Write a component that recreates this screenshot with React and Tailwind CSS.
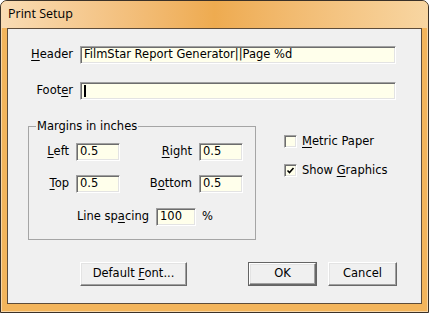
import React from "react";

const font = { fontFamily: '"DejaVu Sans", sans-serif' };

function U({ children }) {
  return <span className="underline underline-offset-2 decoration-1">{children}</span>;
}

function Field({ width, value, caret }) {
  return (
    <div
      className={`${width} h-[18px] bg-[#ffffeb] border border-t-[#a0a0a0] border-l-[#a0a0a0] border-b-[#ffffff] border-r-[#ffffff] shadow-[inset_1px_1px_0_#6d6d6d,inset_-1px_-1px_0_#e3e3e3] flex items-center pl-[3px] text-[11.5px] leading-none text-black whitespace-nowrap`}
    >
      {caret ? <span className="w-[2px] h-[12px] bg-black" /> : value}
    </div>
  );
}

function Check({ checked }) {
  return (
    <div className="w-[13px] h-[13px] bg-[#ffffeb] border border-t-[#a0a0a0] border-l-[#a0a0a0] border-b-[#ffffff] border-r-[#ffffff] shadow-[inset_1px_1px_0_#6d6d6d,inset_-1px_-1px_0_#e3e3e3] flex items-center justify-center">
      {checked && (
        <svg width="9" height="9" viewBox="0 0 9 9">
          <path d="M1.5 4.5 L3.5 6.5 L7.5 2" stroke="#000" strokeWidth="1.6" fill="none" />
        </svg>
      )}
    </div>
  );
}

function Button({ width, children, isDefault }) {
  const inner =
    "h-full w-full flex items-center justify-center bg-[#f0f0f0] border border-t-[#ffffff] border-l-[#ffffff] border-r-[#696969] border-b-[#696969] shadow-[inset_-1px_-1px_0_#a0a0a0,inset_1px_1px_0_#e3e3e3] text-black";
  return isDefault ? (
    <div className={`${width} h-[24px] border border-[#646464]`}>
      <div className={inner}>
        <span>{children}</span>
      </div>
    </div>
  ) : (
    <div className={`${width} h-[24px]`}>
      <div className={inner}>
        <span>{children}</span>
      </div>
    </div>
  );
}

export default function App() {
  return (
    <div className="w-[429px] h-[313px] flex flex-col bg-[#f3b55c] border border-[#3a3128] rounded-t-[7px] shadow-[inset_0_0_0_1px_rgba(255,255,255,0.45)] overflow-hidden">
      {/* Title bar */}
      <div className="h-[27px] flex items-center pl-[7px] bg-gradient-to-r from-[#f9dcb4] via-[#eeab50] to-[#f8d6a2]">
        <span className="text-[12.5px] text-black" style={{ fontFamily: '"Open Sans", sans-serif' }}>
          Print Setup
        </span>
      </div>

      {/* Client area */}
      <div
        className="flex-1 mx-[6px] mb-[8px] bg-[#f0f0f0] border border-[#5d4c3a] flex flex-col text-[11.5px] text-black"
        style={font}
      >
        {/* Header / Footer */}
        <div className="flex items-center mt-[17px] gap-[7px]">
          <div className="w-[65px] text-right">
            <U>H</U>eader
          </div>
          <Field width="w-[316px]" value="FilmStar Report Generator||Page %d" />
        </div>
        <div className="flex items-center mt-[18px] gap-[7px]">
          <div className="w-[65px] text-right">
            Foot<U>e</U>r
          </div>
          <Field width="w-[316px]" caret />
        </div>

        {/* Middle */}
        <div className="flex mt-[19px]">
          <fieldset className="ml-[20px] w-[228px] h-[121px] border border-[#a5a5a5] px-0 pt-[10px]">
            <legend className="ml-[7px] px-[1px] leading-[14px]">Margins in inches</legend>
            <div className="flex items-center gap-[7px]">
              <div className="w-[40px] text-right">
                <U>L</U>eft
              </div>
              <Field width="w-[44px]" value="0.5" />
              <div className="w-[65px] text-right">
                <U>R</U>ight
              </div>
              <Field width="w-[44px]" value="0.5" />
            </div>
            <div className="flex items-center gap-[7px] mt-[14px]">
              <div className="w-[40px] text-right">
                <U>T</U>op
              </div>
              <Field width="w-[44px]" value="0.5" />
              <div className="w-[65px] text-right">
                B<U>o</U>ttom
              </div>
              <Field width="w-[44px]" value="0.5" />
            </div>
            <div className="flex items-center gap-[7px] mt-[15px]">
              <div className="w-[120px] text-right">
                Line sp<U>a</U>cing
              </div>
              <Field width="w-[40px]" value="100" />
              <span className="ml-[-1px]">%</span>
            </div>
          </fieldset>

          <div className="ml-[28px] flex flex-col gap-[12px] pt-[14px]">
            <div className="flex items-center gap-[5px]">
              <Check />
              <span>
                <U>M</U>etric Paper
              </span>
            </div>
            <div className="flex items-center gap-[5px]">
              <Check checked />
              <span>
                Show <U>G</U>raphics
              </span>
            </div>
          </div>
        </div>

        {/* Buttons */}
        <div className="flex mt-[22px] pl-[72px]">
          <Button width="w-[107px]">
            Default <U>F</U>ont...
          </Button>
          <div className="ml-[61px]">
            <Button width="w-[69px]" isDefault>
              OK
            </Button>
          </div>
          <div className="ml-[11px]">
            <Button width="w-[69px]">Cancel</Button>
          </div>
        </div>
      </div>
    </div>
  );
}
